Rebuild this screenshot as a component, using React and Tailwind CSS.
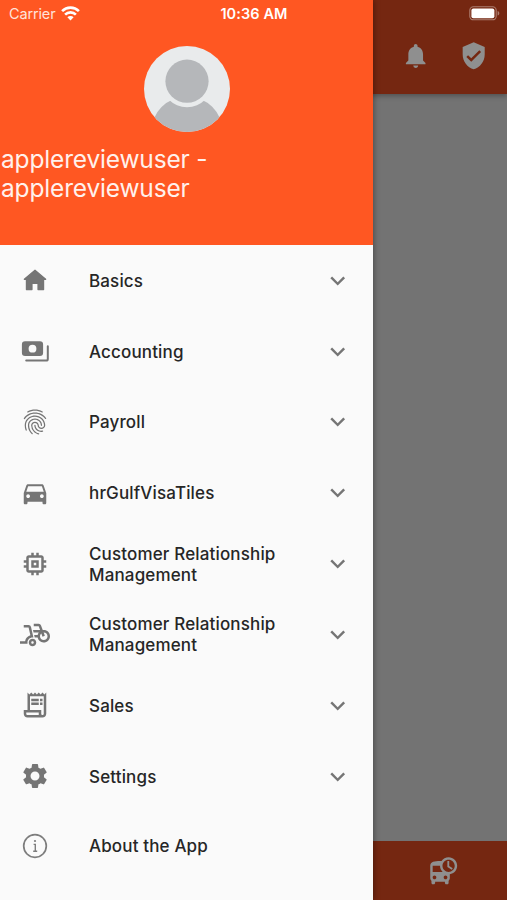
import { useState } from 'react';
import {
  MdBikeScooter,
  MdDepartureBoard,
  MdDirectionsCar,
  MdExpandMore,
  MdFingerprint,
  MdMemory,
  MdNotifications,
  MdOutlineReceiptLong,
  MdSettings,
  MdVerifiedUser,
} from 'react-icons/md';

const MENU = [
  { id: 'basics', title: 'Basics', icon: HomeIcon },
  { id: 'accounting', title: 'Accounting', icon: PaymentsIcon },
  { id: 'payroll', title: 'Payroll', icon: MdFingerprint },
  { id: 'visa', title: 'hrGulfVisaTiles', icon: MdDirectionsCar },
  { id: 'crm', title: 'Customer Relationship Management', icon: MdMemory },
  { id: 'crm2', title: 'Customer Relationship Management', icon: MdBikeScooter },
  { id: 'sales', title: 'Sales', icon: MdOutlineReceiptLong },
  { id: 'settings', title: 'Settings', icon: MdSettings },
];

function HomeIcon({ size, className }) {
  return (
    <svg width={size} height={size} viewBox="0 0 30 30" className={className}>
      <path
        d="M15 5.2 25.7 14.3H23.6V24.6H18V18.3H12V24.6H6.4V14.3H4.3Z"
        fill="currentColor"
        stroke="currentColor"
        strokeWidth="1.2"
        strokeLinejoin="round"
      />
    </svg>
  );
}

function PaymentsIcon({ size, className }) {
  return (
    <svg width={size} height={size} viewBox="0 0 30 30" className={className}>
      <path
        d="M5.1 5.3h14.800a3.200 3.200 0 0 1 3.200 3.200v8.300a3.200 3.200 0 0 1-3.200 3.200H5.100a3.200 3.200 0 0 1-3.200-3.200V8.500a3.200 3.200 0 0 1 3.200-3.200ZM12.500 8.800a3.900 3.900 0 1 0 0 7.800 3.900 3.900 0 0 0 0-7.800Z"
        fill="currentColor"
        fillRule="evenodd"
      />
      <path d="M27.800 10.300v12.600q0 1.600-1.600 1.600H6.200" fill="none" stroke="currentColor" strokeWidth="2" strokeLinecap="round" />
    </svg>
  );
}

function WifiIcon() {
  return (
    <svg width="19" height="15" viewBox="0 0 19 15" fill="none" stroke="white" strokeWidth="2.6">
      <path d="M1.1 5.1a11.9 11.9 0 0 1 16.8 0" />
      <path d="M4.1 8.6a7.6 7.6 0 0 1 10.8 0" />
      <path d="M9.5 14.4 6.4 11.3a4.4 4.4 0 0 1 6.2 0Z" fill="white" stroke="none" />
    </svg>
  );
}

function BatteryIcon() {
  return (
    <svg width="31" height="15" viewBox="0 0 31 15" fill="none">
      <rect x="0.8" y="0.8" width="26.4" height="13" rx="3.6" stroke="white" strokeOpacity="0.4" strokeWidth="1.1" />
      <rect x="2.4" y="2.4" width="23" height="9.8" rx="2" fill="white" />
      <path d="M28.6 5v4.6c1.1-.4 1.7-1.2 1.7-2.3S29.7 5.4 28.6 5Z" fill="white" fillOpacity="0.4" />
    </svg>
  );
}

function Avatar() {
  return (
    <svg width="86" height="86" viewBox="0 0 86 86">
      <defs>
        <clipPath id="avatar-clip">
          <circle cx="43" cy="43" r="43" />
        </clipPath>
      </defs>
      <g clipPath="url(#avatar-clip)">
        <rect width="86" height="86" fill="#e9ebec" />
        <circle cx="43" cy="86.5" r="36" fill="#b5b7ba" />
        <circle cx="43" cy="35.2" r="26" fill="#e9ebec" />
        <circle cx="43" cy="35.2" r="21.6" fill="#b5b7ba" />
      </g>
    </svg>
  );
}

function InfoIcon() {
  return (
    <svg width="30" height="30" viewBox="0 0 30 30" fill="none" stroke="#7d7d7d" strokeWidth="1.7">
      <circle cx="15" cy="15" r="11.3" />
      <path d="M13.6 13.4h1.7v6.6M13.2 20.2h4" strokeWidth="1.4" />
      <circle cx="15" cy="10" r="1.1" fill="#7d7d7d" stroke="none" />
    </svg>
  );
}

function MenuRow({ item, open, onToggle }) {
  const Icon = item.icon;
  return (
    <button onClick={onToggle} className="flex h-[70.85px] w-full items-center pl-5 pr-5 text-left">
      <Icon size={30} className="shrink-0 text-[#757575]" />
      <span className="ml-[39px] flex-1 pt-[1.5px] pr-10 text-[17px] leading-[21px] tracking-[0.15px] font-medium text-[#262626]">
        {item.title}
      </span>
      <MdExpandMore size={29.4} className={`shrink-0 text-[#757575] ${open ? 'rotate-180' : ''}`} />
    </button>
  );
}

export default function App() {
  const [openId, setOpenId] = useState(null);

  return (
    <div className="relative h-[900px] w-[507px] overflow-hidden bg-[#737373] font-['Inter',sans-serif]">
      {/* Page behind the drawer */}
      <div className="flex h-full flex-col">
        <header className="z-10 flex h-[94px] shrink-0 items-end justify-end gap-[29px] bg-[#752711] pr-[18.5px] pb-[24px] text-[#8f8f8f] shadow-[0_2px_5px_rgba(0,0,0,0.3)]">
          <MdNotifications size={29.4} />
          <MdVerifiedUser size={29.4} />
        </header>
        <main className="flex-1" />
        <footer className="flex h-[59px] shrink-0 items-center justify-end bg-[#752711] pr-[49px] text-[#8f8f8f]">
          <MdDepartureBoard size={29.4} />
        </footer>
      </div>

      {/* Drawer */}
      <aside className="absolute inset-y-0 left-0 z-20 flex w-[372.5px] flex-col bg-[#fafafa] shadow-[1px_0_6px_rgba(0,0,0,0.35)]">
        <div className="flex h-[245px] shrink-0 flex-col bg-[#ff5722] pt-[46px]">
          <div className="flex justify-center pl-px">
            <Avatar />
          </div>
          <p className="mt-[13px] pl-px text-[24.5px] leading-[29.3px] tracking-[-0.17px] text-[#fff1ec]">
            applereviewuser -<br />
            applereviewuser
          </p>
        </div>
        <nav className="flex flex-col">
          {MENU.map((item) => (
            <MenuRow
              key={item.id}
              item={item}
              open={openId === item.id}
              onToggle={() => setOpenId(openId === item.id ? null : item.id)}
            />
          ))}
          <button className="flex h-[69px] items-center pl-5 text-left">
            <InfoIcon />
            <span className="ml-[39px] pt-px text-[17px] leading-[21px] tracking-[0.15px] font-medium text-[#262626]">
              About the App
            </span>
          </button>
        </nav>
      </aside>

      {/* Status bar */}
      <div className="absolute inset-x-0 top-0 z-30 grid h-[27px] grid-cols-3 items-center pl-[8px] pr-[7px] text-[14.5px] text-white">
        <div className="flex items-center gap-[6px] pl-px text-[#ffe3da]">
          <span className="tracking-[-0.15px]">Carrier</span>
          <WifiIcon />
        </div>
        <span className="text-center font-semibold tracking-[0.1px]">10:36 AM</span>
        <div className="flex justify-end">
          <BatteryIcon />
        </div>
      </div>
    </div>
  );
}
